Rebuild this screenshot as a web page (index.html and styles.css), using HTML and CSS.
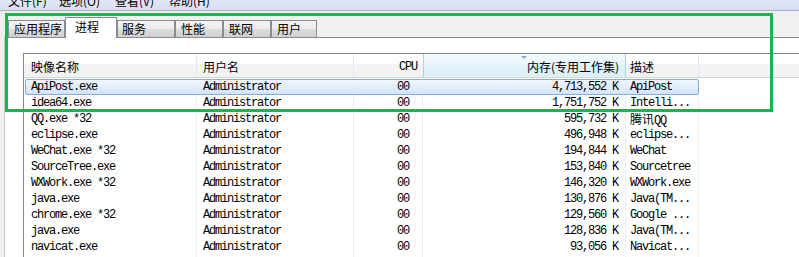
FILE: index.html
```html
<!DOCTYPE html>
<html lang="zh-CN">
<head>
<meta charset="utf-8">
<title>任务管理器 - 进程</title>
<link rel="stylesheet" href="styles.css">
</head>
<body>
<div class="window">
  <div class="menubar">
    <div class="menu-items">
      <span class="mi m1">文件(F)</span>
      <span class="mi m2">选项(O)</span>
      <span class="mi m3">查看(V)</span>
      <span class="mi m4">帮助(H)</span>
    </div>
  </div>
  <div class="tabstrip">
    <div class="tab t1">应用程序</div>
    <div class="tab t2 active">进程</div>
    <div class="tab t3">服务</div>
    <div class="tab t4">性能</div>
    <div class="tab t5">联网</div>
    <div class="tab t6">用户</div>
  </div>
  <div class="panel">
    <div class="listview">
      <div class="lv-header">
        <div class="hc c1">映像名称</div>
        <div class="hc c2">用户名</div>
        <div class="hc c3 mono">CPU</div>
        <div class="hc c4 sorted"><span class="sort-arrow"></span>内存(专用工作集)</div>
        <div class="hc c5">描述</div>
        <div class="hc c6"></div>
      </div>
      <div class="rows">
        <div class="row sel"><div class="c c1">ApiPost.exe</div><div class="c c2">Administrator</div><div class="c c3">00</div><div class="c c4">4,713,552 K</div><div class="c c5">ApiPost</div></div>
        <div class="row"><div class="c c1">idea64.exe</div><div class="c c2">Administrator</div><div class="c c3">00</div><div class="c c4">1,751,752 K</div><div class="c c5">Intelli...</div></div>
        <div class="row"><div class="c c1">QQ.exe *32</div><div class="c c2">Administrator</div><div class="c c3">00</div><div class="c c4">595,732 K</div><div class="c c5"><span class="cjk">腾讯</span>QQ</div></div>
        <div class="row"><div class="c c1">eclipse.exe</div><div class="c c2">Administrator</div><div class="c c3">00</div><div class="c c4">496,948 K</div><div class="c c5">eclipse...</div></div>
        <div class="row"><div class="c c1">WeChat.exe *32</div><div class="c c2">Administrator</div><div class="c c3">00</div><div class="c c4">194,844 K</div><div class="c c5">WeChat</div></div>
        <div class="row"><div class="c c1">SourceTree.exe</div><div class="c c2">Administrator</div><div class="c c3">00</div><div class="c c4">153,840 K</div><div class="c c5">Sourcetree</div></div>
        <div class="row"><div class="c c1">WXWork.exe *32</div><div class="c c2">Administrator</div><div class="c c3">00</div><div class="c c4">146,320 K</div><div class="c c5">WXWork.exe</div></div>
        <div class="row"><div class="c c1">java.exe</div><div class="c c2">Administrator</div><div class="c c3">00</div><div class="c c4">130,876 K</div><div class="c c5">Java(TM...</div></div>
        <div class="row"><div class="c c1">chrome.exe *32</div><div class="c c2">Administrator</div><div class="c c3">00</div><div class="c c4">129,560 K</div><div class="c c5">Google ...</div></div>
        <div class="row"><div class="c c1">java.exe</div><div class="c c2">Administrator</div><div class="c c3">00</div><div class="c c4">128,836 K</div><div class="c c5">Java(TM...</div></div>
        <div class="row"><div class="c c1">navicat.exe</div><div class="c c2">Administrator</div><div class="c c3">00</div><div class="c c4">93,056 K</div><div class="c c5">Navicat...</div></div>
        <div class="row"><div class="c c1"></div><div class="c c2"></div><div class="c c3"></div><div class="c c4"></div><div class="c c5"></div></div>
      </div>
    </div>
  </div>
  <div class="annot"></div>
</div>
</body>
</html>
```

FILE: styles.css
```css
html, body {
  margin: 0;
  padding: 0;
}
body {
  width: 799px;
  height: 257px;
  overflow: hidden;
  background: #f0f0f0;
  font-family: "Noto Sans CJK SC", "Liberation Sans", sans-serif;
  font-size: 12px;
  color: #000;
}
.window {
  position: relative;
  width: 799px;
  height: 257px;
  overflow: hidden;
}

/* menu bar */
.menubar {
  height: 10px;
  overflow: hidden;
  background: linear-gradient(#e3e7f5, #d8def1);
  border-bottom: 1px solid #aab0c2;
}
.menu-items {
  display: flex;
  margin-top: -5px;
  line-height: 12px;
  padding-left: 8px;
}
.mi { display: block; white-space: nowrap; }
.m1 { width: 51px; }
.m2 { width: 56px; }
.m3 { width: 54px; }

/* tabs */
.tabstrip {
  display: flex;
  align-items: flex-end;
  height: 20px;
  padding-top: 6px;
  padding-left: 8px;
}
.tab {
  box-sizing: border-box;
  height: 17px;
  line-height: 15px;
  padding-left: 5px;
  border: 1px solid #898c95;
  border-bottom: none;
  background: linear-gradient(#f3f3f3 0%, #ebebeb 48%, #dddddd 52%, #cfcfcf 100%);
  white-space: nowrap;
}
.t1 { width: 57px; }
.t2 { width: 52px; }
.t3 { width: 58px; padding-left: 4px; }
.t4 { width: 48px; }
.t5 { width: 48px; }
.t6 { width: 46px; }
.tab.active {
  position: relative;
  z-index: 1;
  height: 21px;
  margin-bottom: -1px;
  line-height: 18px;
  padding-left: 9px;
  background: #fff;
}

/* panel */
.panel {
  margin-left: 4px;
  height: 220px;
  background: #fff;
  border-top: 1px solid #898c95;
  border-left: 1px solid #c9c9c9;
  padding-top: 15px;
  padding-left: 18px;
}
.listview {
  width: 800px;
  height: 210px;
  background: #fff;
  border-top: 1px solid #828790;
  border-left: 1px solid #828790;
}

/* header */
.lv-header {
  display: flex;
  height: 24px;
  box-sizing: border-box;
  border-bottom: 1px solid #d5d5d5;
  background: linear-gradient(#ffffff 0%, #ffffff 42%, #f3f4f6 46%, #f1f2f4 100%);
}
.hc {
  box-sizing: border-box;
  height: 23px;
  line-height: 20px;
  padding-top: 3px;
  border-right: 1px solid #e3e6ea;
  white-space: nowrap;
}
.hc.c1 { width: 173px; padding-left: 7px; }
.hc.c2 { width: 157px; padding-left: 6px; }
.hc.c3 { width: 69px; text-align: right; padding-right: 6px; border-right: none; }
.hc.c4 {
  position: relative;
  width: 203px;
  text-align: right;
  padding-right: 6px;
  border-left: 1px solid #a5d3ee;
  border-right: 1px solid #a5d3ee;
  background: linear-gradient(#f3fafd 0%, #eaf6fc 45%, #dff1fa 50%, #dcf0fa 100%);
}
.hc.c5 { width: 73px; padding-left: 4px; }
.hc.c6 { flex: 1; border-right: none; }
.mono {
  font-family: "Liberation Mono", "Noto Sans CJK SC", monospace;
  font-size: 12px;
  letter-spacing: -1.2px;
}
.sort-arrow {
  position: absolute;
  top: 2px;
  left: 97px;
  width: 0;
  height: 0;
  border-left: 3px solid transparent;
  border-right: 3px solid transparent;
  border-top: 3px solid #8aa3c2;
}

/* rows */
.rows {
  padding-top: 1px;
  font-family: "Liberation Mono", "Noto Sans CJK SC", monospace;
  font-size: 12px;
  letter-spacing: -1.2px;
}
.row {
  position: relative;
  display: flex;
  height: 16px;
  line-height: 16px;
}
.c {
  position: relative;
  z-index: 1;
  box-sizing: border-box;
  height: 16px;
  border-right: 1px solid #ebeff5;
  white-space: nowrap;
  overflow: hidden;
}
.c.c1 { width: 173px; padding-left: 7px; }
.c.c2 { width: 157px; padding-left: 6px; }
.c.c3 { width: 69px; text-align: right; padding-right: 13px; }
.c.c4 { width: 203px; text-align: right; padding-right: 7px; }
.c.c5 { width: 73px; padding-left: 4px; }
.cjk {
  font-family: "Noto Sans CJK SC", sans-serif;
  font-size: 12px;
  letter-spacing: 0;
}
.row.sel .c { border-right-color: transparent; }
.row.sel::before {
  content: "";
  position: absolute;
  left: 1px;
  top: 0;
  width: 674px;
  height: 16px;
  box-sizing: border-box;
  border: 1px solid #84acdd;
  border-radius: 2px;
  background: linear-gradient(#eef5fe 0%, #dfecfc 60%, #d2e4fa 100%);
}

/* annotation rectangle drawn over the screenshot */
.annot {
  position: absolute;
  left: 5px;
  top: 13px;
  width: 768px;
  height: 99px;
  box-sizing: border-box;
  border: 3px solid #22b14c;
  z-index: 5;
}
```
